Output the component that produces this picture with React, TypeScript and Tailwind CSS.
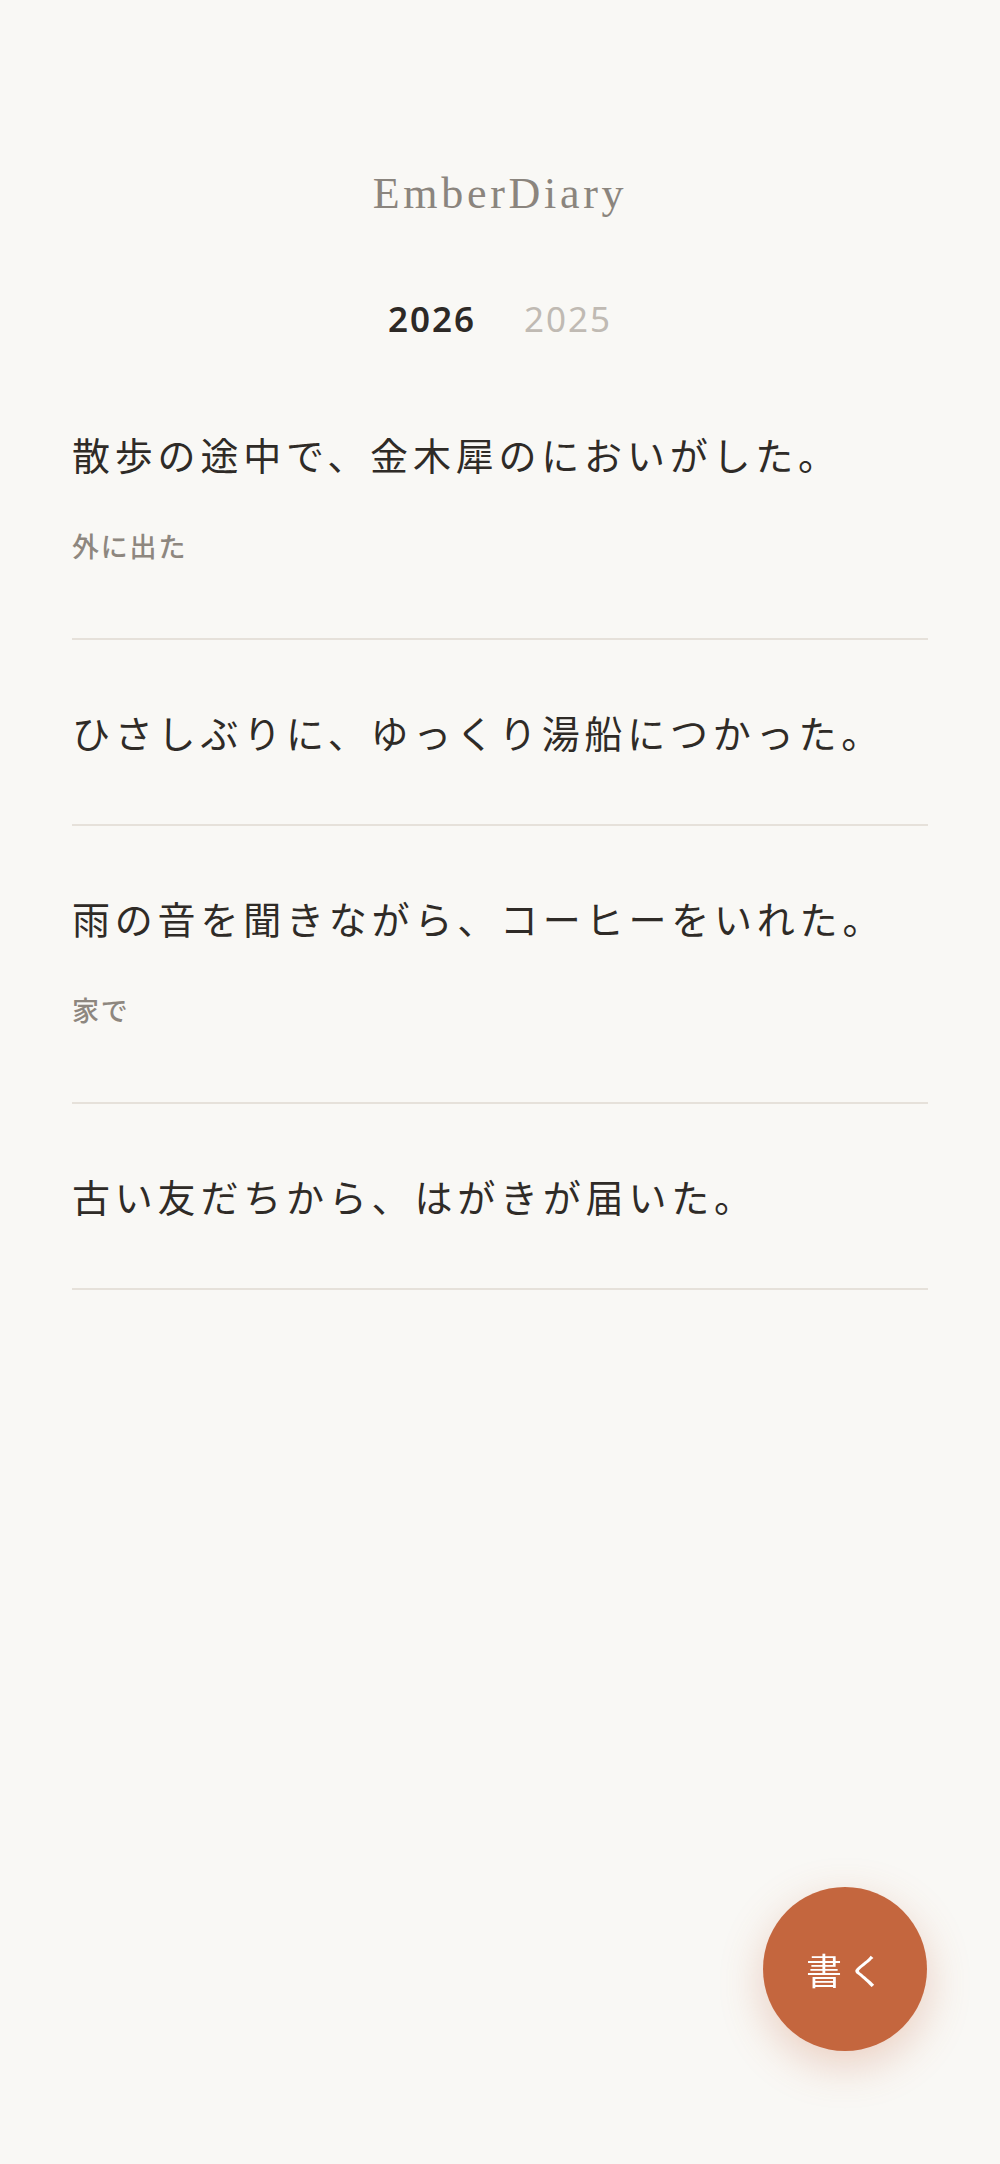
import React from "react";

type Entry = { text: string; tag?: string };

const entries: Entry[] = [
  { text: "散歩の途中で、金木犀のにおいがした。", tag: "外に出た" },
  { text: "ひさしぶりに、ゆっくり湯船につかった。" },
  { text: "雨の音を聞きながら、コーヒーをいれた。", tag: "家で" },
  { text: "古い友だちから、はがきが届いた。" },
];

export default function App() {
  return (
    <div className="min-h-screen bg-[#f9f8f5] font-['Noto_Sans','Noto_Sans_CJK_JP',sans-serif]">
      <main className="px-[72px] pt-[172px] pb-[300px]">
        <h1 className="text-center font-['Liberation_Serif','Noto_Sans_CJK_JP',serif] text-[44px] leading-[44px] tracking-[3.7px] text-[#8b857e] font-normal">
          EmberDiary
        </h1>
        <nav className="mt-[85px] flex justify-center gap-12 text-[35px] leading-[35px] tracking-[2px]">
          <button className="font-semibold text-[#2d2926]">2026</button>
          <button className="font-normal text-[#c0bab3]">2025</button>
        </nav>
        <ul className="mt-[26px]">
          {entries.map((e, i) => (
            <li key={i} className="border-b-2 border-[#e6e1da] py-[62px]">
              <p className="font-['Noto_Sans_CJK_JP',sans-serif] text-[38px] leading-[60px] tracking-[4.8px] text-[#2f2b27] whitespace-nowrap">
                {e.text}
              </p>
              {e.tag && (
                <p className="mt-[32px] font-['Noto_Sans_CJK_JP',sans-serif] font-medium text-[27px] leading-[60px] tracking-[1.8px] text-[#8e877f]">
                  {e.tag}
                </p>
              )}
            </li>
          ))}
        </ul>
      </main>
      <button className="fixed right-[73px] bottom-[113px] flex h-[164px] w-[164px] items-center justify-center rounded-full bg-[#c4663e] font-['Noto_Sans_CJK_JP',sans-serif] text-[36px] tracking-[6px] text-white shadow-[0_14px_44px_rgba(196,102,62,0.28)]">
        <span className="pl-[6px]">書く</span>
      </button>
    </div>
  );
}
